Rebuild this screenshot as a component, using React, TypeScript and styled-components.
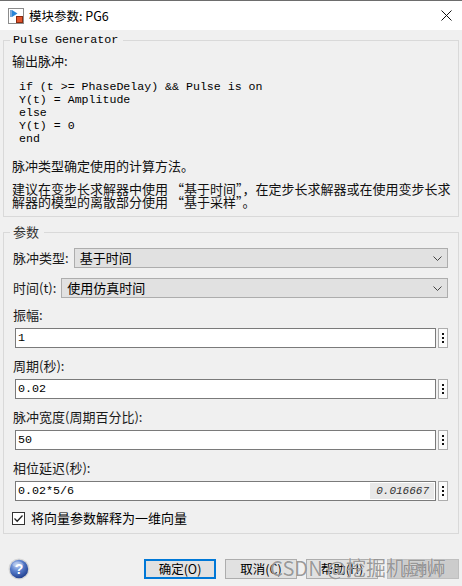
import React from "react";
import styled, { createGlobalStyle } from "styled-components";

const GlobalStyle = createGlobalStyle`
  html, body {
    margin: 0;
    padding: 0;
    background: #f0f0f0;
  }
  body {
    font-family: "Noto Sans CJK SC", "Noto Sans", sans-serif;
    font-size: 13px;
    color: #000;
  }
  * {
    box-sizing: border-box;
  }
`;

const MONO = `"Liberation Mono", "Noto Sans CJK SC", monospace`;

const Window = styled.div`
  position: relative;
  width: 462px;
  height: 586px;
  display: flex;
  flex-direction: column;
  background: #f0f0f0;
  overflow: hidden;
`;

const TitleBar = styled.div`
  flex: none;
  height: 30px;
  display: flex;
  align-items: center;
  gap: 5px;
  padding: 0 10px 0 8px;
  background: #fff;
  border-top: 1px solid #6d6d6d;
`;

const TitleText = styled.span`
  flex: 1;
  font-size: 12.5px;
  line-height: 16px;
  color: #000;
`;

const Body = styled.div`
  flex: 1;
  display: flex;
  flex-direction: column;
  padding: 3px 3px 0;
`;

const Group = styled.fieldset<{ $gap?: number; $padRight?: number }>`
  margin: ${p => p.$gap ?? 0}px 0 0;
  padding: ${p => (p.$padRight ? "8px" : "7px")} ${p => p.$padRight ?? 8}px
    ${p => (p.$padRight ? "7px" : "8px")} 8px;
  min-width: 0;
  border: 1px solid #d9d9d9;
`;

const Legend = styled.legend<{ $mono?: boolean }>`
  margin-left: -2px;
  padding: 0 5px 0 3px;
  font-family: ${p => (p.$mono ? MONO : `"Noto Sans CJK SC", sans-serif`)};
  font-size: ${p => (p.$mono ? "11.7px" : "13px")};
  line-height: ${p => (p.$mono ? "14px" : "16px")};
  color: ${p => (p.$mono ? "#000" : "#333")};
`;

const Para = styled.div<{ $top?: number }>`
  margin-top: ${p => p.$top ?? 0}px;
  font-size: 13px;
  line-height: 13px;
  color: #111;
  white-space: nowrap;
`;

const Code = styled.pre`
  margin: 13px 0 0;
  padding-left: 7px;
  font-family: ${MONO};
  font-size: 11.6px;
  line-height: 13px;
`;

const SelectRow = styled.div<{ $top?: number }>`
  display: flex;
  align-items: center;
  gap: 5px;
  margin-top: ${p => p.$top ?? 0}px;
`;

const Label = styled.span`
  padding-left: 1px;
  font-size: 13px;
  line-height: 16px;
  color: #1a1a1a;
  white-space: nowrap;
`;

const Dropdown = styled.div`
  flex: 1;
  height: 20px;
  display: flex;
  align-items: center;
  justify-content: space-between;
  padding: 0 5px 0 5px;
  background: #e1e1e1;
  border: 1px solid #adadad;
  font-size: 13px;
  line-height: 18px;
`;

const Field = styled.div<{ $top: number }>`
  display: flex;
  flex-direction: column;
  gap: 5px;
  margin-top: ${p => p.$top}px;
`;

const InputRow = styled.div`
  display: flex;
  gap: 2px;
  margin-left: 3px;
`;

const InputBox = styled.div`
  flex: 1;
  height: 20px;
  display: flex;
  align-items: center;
  padding: 0 1px 0 2px;
  background: #fff;
  border: 1px solid #7a7a7a;
`;

const Value = styled.span`
  font-family: ${MONO};
  font-size: 11.7px;
  line-height: 18px;
`;

const Evaluated = styled.span`
  margin-left: auto;
  height: 16px;
  padding: 0 5px 0 6px;
  background: #e8e8e8;
  font-family: ${MONO};
  font-style: italic;
  font-size: 11px;
  line-height: 16px;
  color: #333;
`;

const DotsButton = styled.div`
  flex: none;
  width: 10px;
  height: 20px;
  display: flex;
  align-items: center;
  justify-content: center;
  background: #fbfbfb;
  border: 1px solid #adadad;
`;

const CheckRow = styled.label`
  display: flex;
  align-items: center;
  gap: 6px;
  margin-top: 9px;
  height: 16px;
  font-size: 13px;
  line-height: 16px;
`;

const CheckBox = styled.span`
  width: 13px;
  height: 13px;
  display: flex;
  align-items: center;
  justify-content: center;
  background: #fff;
  border: 1px solid #333;
`;

const Footer = styled.div`
  flex: 1;
  display: flex;
  align-items: flex-end;
  padding: 0 0 7px 5px;
`;

const HelpIcon = styled.svg`
  flex: none;
  margin-bottom: -1px;
`;

const Buttons = styled.div`
  display: flex;
  gap: 9px;
  margin-left: auto;
`;

const Button = styled.button<{ $primary?: boolean }>`
  width: 72px;
  height: 20px;
  padding: 0;
  font-family: "Noto Sans CJK SC", sans-serif;
  font-size: 12.5px;
  line-height: 16px;
  color: #000;
  background: #e1e1e1;
  border: ${p => (p.$primary ? "2px solid #0078d7" : "1px solid #adadad")};
  &:disabled {
    background: #cccccc;
    border-color: #bfbfbf;
    color: #8a8a8a;
  }
`;

const Watermark = styled.div`
  position: absolute;
  right: 16px;
  bottom: 6px;
  font-family: "Noto Sans CJK SC", sans-serif;
  font-size: 20px;
  line-height: 24px;
  color: rgba(105, 105, 105, 0.68);
  text-shadow: 0 0 1px rgba(255, 255, 255, 0.9);
  pointer-events: none;
`;

const BlockIcon = () => (
  <svg width="16" height="16" viewBox="0 0 16 16">
    <rect x="0.5" y="0.5" width="15" height="15" fill="#fff" stroke="#8c8c8c" />
    <path d="M3 2 V9" stroke="#1d6fc4" strokeWidth="1.2" />
    <path d="M4 2 L9.5 5.5 L4 9 Z" fill="#2a86d8" />
    <rect x="8.5" y="8.5" width="6" height="6" fill="#e2552c" stroke="#8a2b10" />
  </svg>
);

const CloseIcon = () => (
  <svg width="11" height="11" viewBox="0 0 11 11">
    <path d="M0.5 0.5 L10.5 10.5 M10.5 0.5 L0.5 10.5" stroke="#111" strokeWidth="1" />
  </svg>
);

const Chevron = () => (
  <svg width="9" height="5" viewBox="0 0 9 5">
    <path d="M0.5 0.5 L4.5 4.5 L8.5 0.5" fill="none" stroke="#444" strokeWidth="1" />
  </svg>
);

const Dots = () => (
  <svg width="2" height="12" viewBox="0 0 2 12">
    <rect x="0" y="1" width="2" height="2" fill="#111" />
    <rect x="0" y="5" width="2" height="2" fill="#111" />
    <rect x="0" y="9" width="2" height="2" fill="#111" />
  </svg>
);

const Check = () => (
  <svg width="11" height="11" viewBox="0 0 11 11">
    <path d="M1.5 5.5 L4.2 8.2 L9.5 2.5" fill="none" stroke="#222" strokeWidth="1.3" />
  </svg>
);

const Help = () => (
  <HelpIcon width="22" height="22" viewBox="0 0 22 22">
    <defs>
      <radialGradient id="helpFill" cx="0.38" cy="0.3" r="0.75">
        <stop offset="0" stopColor="#b9cdf2" />
        <stop offset="0.45" stopColor="#5a7fcc" />
        <stop offset="1" stopColor="#1f3c8c" />
      </radialGradient>
    </defs>
    <circle cx="11" cy="11" r="10.5" fill="#d6d6d6" />
    <circle cx="11" cy="11" r="9.2" fill="url(#helpFill)" />
    <ellipse cx="10" cy="6.5" rx="5.5" ry="3" fill="#ffffff" opacity="0.25" />
    <text
      x="11"
      y="16"
      textAnchor="middle"
      fontFamily="Liberation Sans, sans-serif"
      fontWeight="bold"
      fontSize="14"
      fill="#fff"
    >
      ?
    </text>
  </HelpIcon>
);

const params = [
  { label: "振幅:", value: "1", top: 9 },
  { label: "周期(秒):", value: "0.02", top: 10 },
  { label: "脉冲宽度(周期百分比):", value: "50", top: 10 },
  { label: "相位延迟(秒):", value: "0.02*5/6", top: 10, evaluated: "0.016667" }
];

export default function App() {
  return (
    <Window>
      <GlobalStyle />
      <TitleBar>
        <BlockIcon />
        <TitleText>模块参数: PG6</TitleText>
        <CloseIcon />
      </TitleBar>

      <Body>
        <Group>
          <Legend $mono>Pulse Generator</Legend>
          <Para>输出脉冲:</Para>
          <Code>
            {`if (t >= PhaseDelay) && Pulse is on
Y(t) = Amplitude
else
Y(t) = 0
end`}
          </Code>
          <Para $top={14}>脉冲类型确定使用的计算方法。</Para>
          <Para $top={10}>
            建议在变步长求解器中使用 “基于时间”，在定步长求解器或在使用变步长求
            <br />
            解器的模型的离散部分使用 “基于采样”。
          </Para>
        </Group>

        <Group $gap={7} $padRight={10}>
          <Legend>参数</Legend>
          <SelectRow>
            <Label>脉冲类型:</Label>
            <Dropdown>
              基于时间
              <Chevron />
            </Dropdown>
          </SelectRow>
          <SelectRow $top={10}>
            <Label>时间(t):</Label>
            <Dropdown>
              使用仿真时间
              <Chevron />
            </Dropdown>
          </SelectRow>

          {params.map(p => (
            <Field key={p.label} $top={p.top}>
              <Label>{p.label}</Label>
              <InputRow>
                <InputBox>
                  <Value>{p.value}</Value>
                  {p.evaluated && <Evaluated>{p.evaluated}</Evaluated>}
                </InputBox>
                <DotsButton>
                  <Dots />
                </DotsButton>
              </InputRow>
            </Field>
          ))}

          <CheckRow>
            <CheckBox>
              <Check />
            </CheckBox>
            将向量参数解释为一维向量
          </CheckRow>
        </Group>

        <Footer>
          <Help />
          <Buttons>
            <Button $primary>确定(O)</Button>
            <Button>取消(C)</Button>
            <Button>帮助(H)</Button>
            <Button disabled>应用(A)</Button>
          </Buttons>
        </Footer>
      </Body>

      <Watermark>CSDN @挖掘机厨师</Watermark>
    </Window>
  );
}
